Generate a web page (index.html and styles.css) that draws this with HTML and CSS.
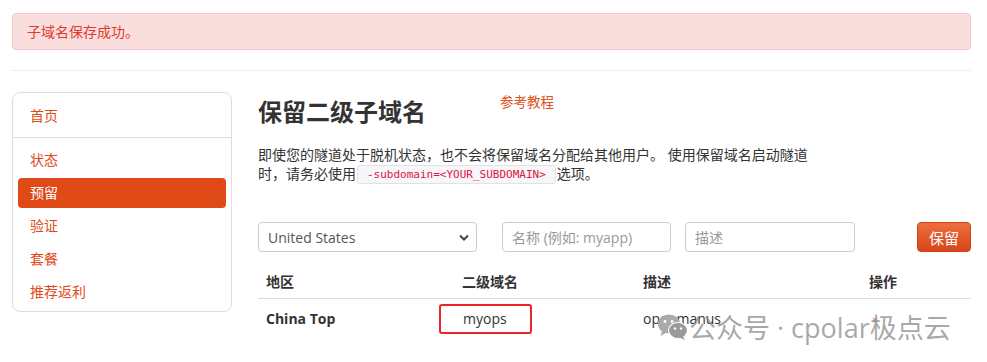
FILE: index.html
```html
<!DOCTYPE html>
<html lang="zh-CN">
<head>
  <meta charset="UTF-8">
  <title>保留二级子域名</title>
  <link rel="stylesheet" href="styles.css">
</head>
<body>
  <div class="page">
    <div class="alert">子域名保存成功。</div>
    <hr class="rule">

    <div class="layout">
      <nav class="sidebar">
        <a class="nav-item" href="#">首页</a>
        <div class="nav-divider"></div>
        <a class="nav-item" href="#">状态</a>
        <a class="nav-item active" href="#">预留</a>
        <a class="nav-item" href="#">验证</a>
        <a class="nav-item" href="#">套餐</a>
        <a class="nav-item" href="#">推荐返利</a>
      </nav>

      <main class="content">
        <div class="title-row">
          <h1>保留二级子域名</h1>
          <a class="guide" href="#">参考教程</a>
        </div>
        <p class="lead">即使您的隧道处于脱机状态，也不会将保留域名分配给其他用户。 使用保留域名启动隧道时，请务必使用<code>-subdomain=&lt;YOUR_SUBDOMAIN&gt;</code>选项。</p>

        <form class="reserve-form">
          <div class="select-wrap">
            <select class="field region">
              <option>United States</option>
              <option>China Top</option>
            </select>
            <svg class="caret" width="10" height="7" viewBox="0 0 10 7"><path d="M1 1.5 L5 5.5 L9 1.5" fill="none" stroke="#444" stroke-width="2"/></svg>
          </div>
          <input class="field name" type="text" placeholder="名称 (例如: myapp)">
          <input class="field desc" type="text" placeholder="描述">
          <button class="btn" type="button">保留</button>
        </form>

        <table class="domains">
          <thead>
            <tr><th class="c-region">地区</th><th class="c-sub">二级域名</th><th class="c-desc">描述</th><th>操作</th></tr>
          </thead>
          <tbody>
            <tr>
              <td class="strong">China Top</td>
              <td><span class="mark">myops</span></td>
              <td>openmanus</td>
              <td><span class="del">×</span></td>
            </tr>
          </tbody>
        </table>
      </main>
    </div>

    <div class="watermark">
      <svg width="32" height="28" viewBox="0 0 32 28">
        <ellipse cx="12" cy="11" rx="11" ry="9.5" fill="#aaa"/>
        <path d="M5 18 L3.5 23 L9.5 19.5 Z" fill="#aaa"/>
        <ellipse cx="21" cy="17.5" rx="9.5" ry="8" fill="#999" stroke="#fff" stroke-width="1.2"/>
        <path d="M26 23.5 L28 27 L22.5 24.5 Z" fill="#999"/>
        <circle cx="8" cy="8.5" r="1.4" fill="#fff"/>
        <circle cx="15" cy="8.5" r="1.4" fill="#fff"/>
        <circle cx="18" cy="15.5" r="1.2" fill="#fff"/>
        <circle cx="24" cy="15.5" r="1.2" fill="#fff"/>
      </svg>
      <span>公众号 · cpolar极点云</span>
    </div>
  </div>
</body>
</html>
```

FILE: styles.css
```css
*, *::before, *::after { box-sizing: border-box; }
body {
  margin: 0;
  font-family: "Open Sans", "Noto Sans CJK SC", sans-serif;
  font-size: 14px;
  color: #333;
  background: #fff;
}
.page {
  position: relative;
  padding: 13px 16px 0 12px;
  height: 362px;
  overflow: hidden;
}
.alert {
  height: 37px;
  padding: 0 14px;
  line-height: 35px;
  background: #fadedd;
  border: 1px solid #f5c6cb;
  border-radius: 4px;
  color: #e0392c;
  font-size: 14px;
}
.rule {
  margin: 20px 0 0;
  border: 0;
  border-top: 1px solid #eee;
}
.layout {
  display: flex;
  gap: 26px;
  margin-top: 21px;
}
.sidebar {
  width: 220px;
  flex: none;
  border: 1px solid #ddd;
  border-radius: 8px;
  padding: 8px 5px 5px;
  display: flex;
  flex-direction: column;
  gap: 3px;
  height: 220px;
}
.nav-item {
  display: block;
  height: 30px;
  line-height: 30px;
  padding-left: 12px;
  color: #e04a17;
  text-decoration: none;
  border-radius: 4px;
}
.nav-item.active {
  background: #df4a16;
  color: #fff;
}
.nav-divider {
  margin: 3px -5px 4px;
  border-top: 1px solid #ddd;
}
.content {
  flex: 1;
  min-width: 0;
}
.title-row {
  display: flex;
  align-items: flex-start;
}
.title-row h1 {
  margin: 5px 0 0;
  font-size: 24px;
  line-height: 30px;
  font-weight: 700;
  color: #333;
}
.guide {
  margin-left: 74px;
  font-size: 13.5px;
  line-height: 20px;
  color: #e0501a;
  text-decoration: none;
}
.lead {
  width: 556px;
  margin: 18px 0 0;
  line-height: 19px;
}
.lead code {
  display: inline-block;
  margin: 0 1px;
  padding: 1px 9px;
  line-height: 15px;
  vertical-align: 1px;
  font-family: "DejaVu Sans Mono", monospace;
  font-size: 11px;
  color: #dd1144;
  background: #f7f7f9;
  border: 1px solid #e1e1e8;
  border-radius: 3px;
}
.reserve-form {
  display: flex;
  margin-top: 38px;
  height: 30px;
}
.field {
  height: 30px;
  border: 1px solid #ccc;
  border-radius: 4px;
  font-family: inherit;
  font-size: 14px;
  color: #555;
  padding: 0 9px;
  background: #fff;
}
.field::placeholder { color: #999; }
.select-wrap {
  position: relative;
  width: 219px;
}
.region {
  width: 100%;
  appearance: none;
}
.caret {
  position: absolute;
  right: 8px;
  top: 12px;
}
.name { width: 169px; margin-left: 25px; }
.desc { width: 170px; margin-left: 14px; }
.btn {
  margin-left: 62px;
  width: 54px;
  height: 30px;
  border: 1px solid #cf4517;
  border-radius: 4px;
  background: linear-gradient(#ee6d3e, #d9461a);
  color: #fff;
  font-family: inherit;
  font-size: 15px;
}
.domains {
  width: 713px;
  margin-top: 12px;
  border-collapse: collapse;
}
.domains th, .domains td {
  padding: 0 8px;
  text-align: left;
}
.domains th {
  height: 34px;
  font-weight: 700;
  border-bottom: 1px solid #ddd;
}
.domains td { height: 40px; }
.c-region { width: 196px; }
.c-sub { width: 181px; }
.c-desc { width: 226px; }
.strong { font-weight: 700; }
.mark {
  position: relative;
  display: inline-block;
  padding-left: 1px;
}
.mark::before {
  content: "";
  position: absolute;
  left: -23px;
  top: -5px;
  width: 93px;
  height: 30px;
  border: 2px solid #e8262a;
  border-radius: 3px;
}
.del {
  color: #e04a17;
  font-size: 11px;
  padding-left: 3px;
}
.watermark {
  position: absolute;
  left: 657px;
  top: 307px;
  display: flex;
  align-items: center;
  gap: 0;
  font-size: 27px;
  color: rgba(140, 140, 140, 0.75);
  white-space: nowrap;
}
```
